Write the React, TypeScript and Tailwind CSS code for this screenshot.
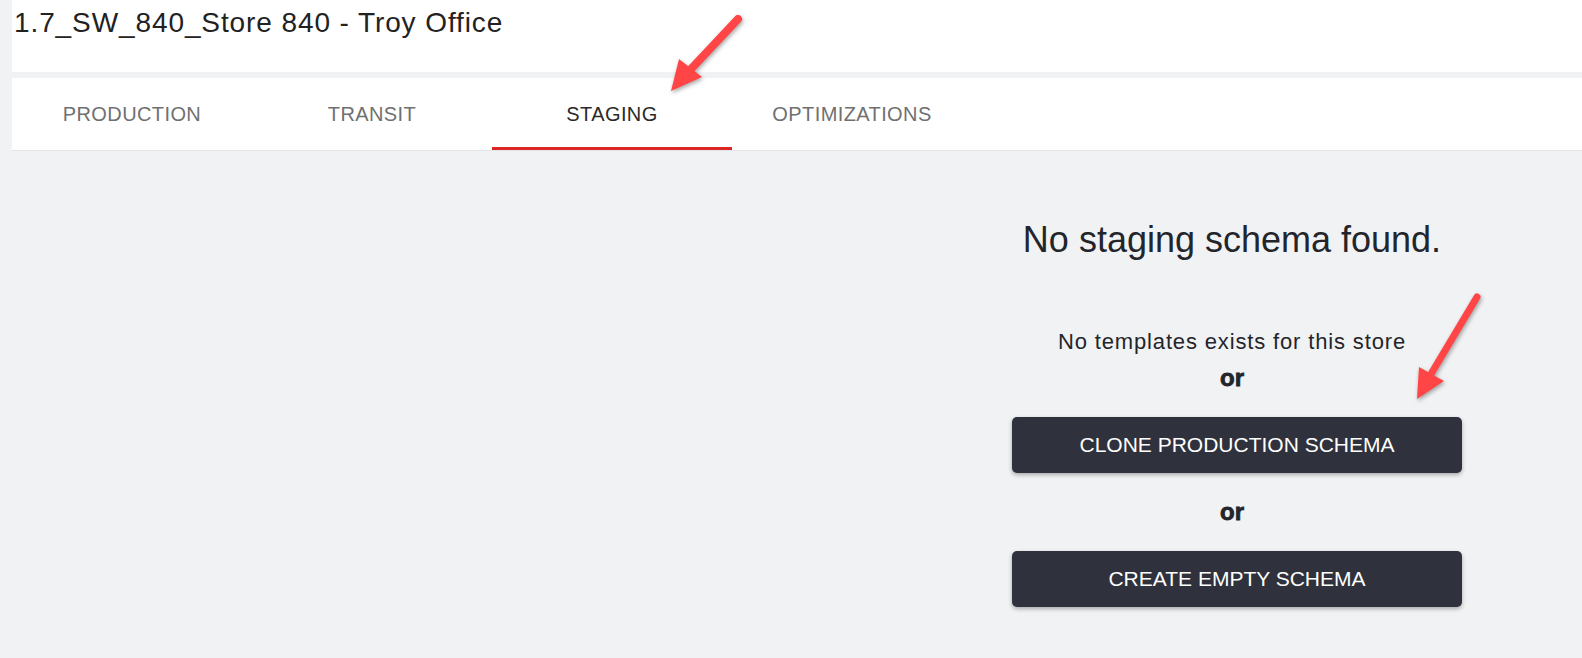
import { useState } from "react";

const tabs = ["PRODUCTION", "TRANSIT", "STAGING", "OPTIMIZATIONS"];

function Arrows() {
  // red annotation arrows drawn over the screenshot
  return (
    <svg
      className="pointer-events-none absolute inset-0 h-full w-full drop-shadow-[1px_2px_2px_rgba(0,0,0,0.35)]"
      viewBox="0 0 1582 658"
    >
      <line x1="738" y1="19" x2="691" y2="69" stroke="#ff4545" strokeWidth="8" strokeLinecap="round" />
      <polygon points="671,91 702,77 679,59" fill="#ff4545" />
      <line x1="1477" y1="297" x2="1431" y2="374" stroke="#ff4545" strokeWidth="7" strokeLinecap="round" />
      <polygon points="1417,399 1444,381 1419,367" fill="#ff4545" />
    </svg>
  );
}

export default function App() {
  const [active, setActive] = useState("STAGING");

  return (
    <div className="relative min-h-screen bg-[#f1f2f4] pl-[12px] font-['Liberation_Sans',Arial,sans-serif]">
      {/* HEADER */}
      <div className="h-[72px] bg-white pl-[2px] pt-[7px]">
        <h1 className="text-[28px] leading-[32px] tracking-[0.9px] text-[#222]">
          1.7_SW_840_Store 840 - Troy Office
        </h1>
      </div>

      {/* TABS */}
      <div className="mt-[6px] flex h-[73px] border-b border-[#e3e4e6] bg-white">
        {tabs.map((tab) => (
          <button
            key={tab}
            onClick={() => setActive(tab)}
            className={`relative flex w-[240px] items-center justify-center text-[20px] tracking-[0.4px] ${
              active === tab ? "text-[#2a2a2a]" : "text-[#707070]"
            }`}
          >
            {tab}
            {active === tab && (
              <span className="absolute bottom-0 left-0 h-[3px] w-full bg-[#dc2626]" />
            )}
          </button>
        ))}
      </div>

      {/* CONTENT */}
      <div className="flex justify-end pr-[120px] pt-[69px]">
        <div className="flex w-[460px] flex-col items-center text-[#23252b]">
          <h2 className="text-[36px] leading-[40px]">No staging schema found.</h2>

          <p className="mt-[68px] text-[22px] leading-[28px] tracking-[0.85px]">
            No templates exists for this store
          </p>
          <p className="mt-[8px] text-[24px] font-bold leading-[28px] [-webkit-text-stroke:0.8px_#23252b]">
            or
          </p>

          <button className="mt-[25px] h-[56px] w-[450px] self-end rounded-[5px] bg-[#2f323c] text-[21px] text-white shadow-[0_2px_4px_rgba(0,0,0,0.3)]">
            CLONE PRODUCTION SCHEMA
          </button>

          <p className="mt-[25px] text-[24px] font-bold leading-[28px] [-webkit-text-stroke:0.8px_#23252b]">
            or
          </p>

          <button className="mt-[25px] h-[56px] w-[450px] self-end rounded-[5px] bg-[#2f323c] text-[21px] text-white shadow-[0_2px_4px_rgba(0,0,0,0.3)]">
            CREATE EMPTY SCHEMA
          </button>
        </div>
      </div>

      <Arrows />
    </div>
  );
}
